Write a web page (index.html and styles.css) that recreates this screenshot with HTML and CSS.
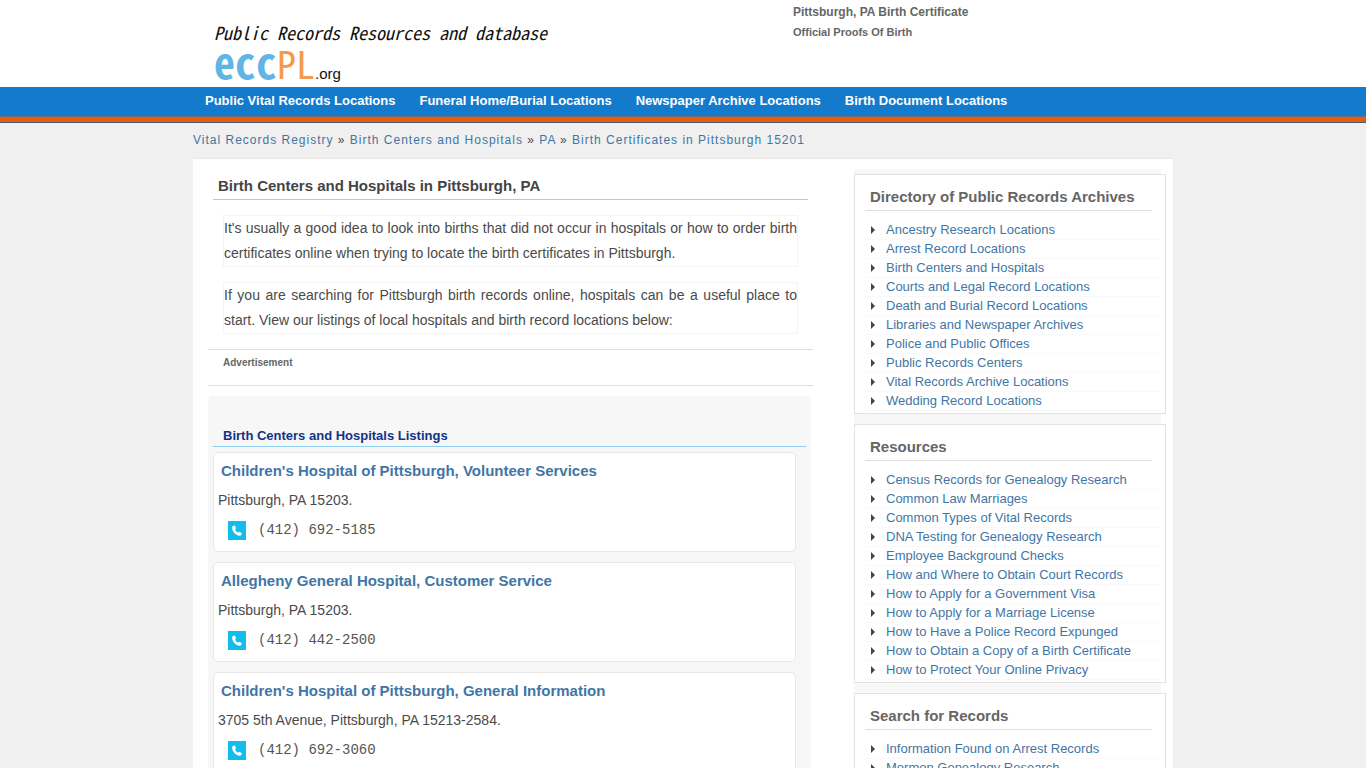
FILE: index.html
```html
<!DOCTYPE html>
<html lang="en">
<head>
<meta charset="utf-8">
<title>Birth Centers and Hospitals in Pittsburgh, PA</title>
<link rel="stylesheet" href="styles.css">
</head>
<body>
<svg class="sprite" aria-hidden="true">
  <symbol id="phone" viewBox="0 0 18 19">
    <path fill="#12bdec" d="M0 0h18v19H0z"/>
    <path fill="#fff" d="M4.6 5.2 6.3 4.4Q6.9 4.3 7.1 4.8L7.9 7Q8 7.5 7.6 7.9L7 8.4Q8 10.6 10.1 11.7L10.8 11Q11.2 10.6 11.7 10.9L13.6 12.1Q14 12.5 13.7 13L12.9 14.3Q12.4 14.9 11.5 14.8C7.5 14.3 4.3 10.8 4.1 6.3Q4 5.5 4.6 5.2Z"/>
  </symbol>
</svg>
<header class="header">
  <div class="wrap header-inner">
    <a class="brand" href="#">
      <span class="tagline">Public Records Resources and database</span>
      <span class="logo"><span class="logo-ecc">ecc</span><span class="logo-pl">PL</span><span class="logo-org">.org</span></span>
    </a>
    <div class="intro">
      <p class="intro-title">Pittsburgh, PA Birth Certificate</p>
      <p class="intro-sub">Official Proofs Of Birth</p>
    </div>
  </div>
</header>
<nav class="nav">
  <div class="wrap nav-inner">
    <a href="#">Public Vital Records Locations</a>
    <a href="#">Funeral Home/Burial Locations</a>
    <a href="#">Newspaper Archive Locations</a>
    <a href="#">Birth Document Locations</a>
  </div>
</nav>
<div class="wrap breadcrumb">
  <a href="#">Vital Records Registry</a> » <a href="#">Birth Centers and Hospitals</a> » <a href="#">PA</a> » <a href="#">Birth Certificates in Pittsburgh 15201</a>
</div>
<div class="wrap page">
  <main class="main">
    <h1>Birth Centers and Hospitals in Pittsburgh, PA</h1>
    <p class="text">It's usually a good idea to look into births that did not occur in hospitals or how to order birth certificates online when trying to locate the birth certificates in Pittsburgh.</p>
    <p class="text">If you are searching for Pittsburgh birth records online, hospitals can be a useful place to start. View our listings of local hospitals and birth record locations below:</p>
    <div class="ad">Advertisement</div>
    <section class="listings">
      <h2>Birth Centers and Hospitals Listings</h2>
      <article class="card">
        <h3><a href="#">Children's Hospital of Pittsburgh, Volunteer Services</a></h3>
        <p class="address">Pittsburgh, PA 15203.</p>
        <p class="phone"><svg class="phone-icon" aria-hidden="true"><use href="#phone"/></svg>(412) 692-5185</p>
      </article>
      <article class="card">
        <h3><a href="#">Allegheny General Hospital, Customer Service</a></h3>
        <p class="address">Pittsburgh, PA 15203.</p>
        <p class="phone"><svg class="phone-icon" aria-hidden="true"><use href="#phone"/></svg>(412) 442-2500</p>
      </article>
      <article class="card">
        <h3><a href="#">Children's Hospital of Pittsburgh, General Information</a></h3>
        <p class="address">3705 5th Avenue, Pittsburgh, PA 15213-2584.</p>
        <p class="phone"><svg class="phone-icon" aria-hidden="true"><use href="#phone"/></svg>(412) 692-3060</p>
      </article>
    </section>
  </main>
  <aside class="sidebar">
    <section class="box">
      <h3>Directory of Public Records Archives</h3>
      <ul>
        <li><a href="#">Ancestry Research Locations</a></li>
        <li><a href="#">Arrest Record Locations</a></li>
        <li><a href="#">Birth Centers and Hospitals</a></li>
        <li><a href="#">Courts and Legal Record Locations</a></li>
        <li><a href="#">Death and Burial Record Locations</a></li>
        <li><a href="#">Libraries and Newspaper Archives</a></li>
        <li><a href="#">Police and Public Offices</a></li>
        <li><a href="#">Public Records Centers</a></li>
        <li><a href="#">Vital Records Archive Locations</a></li>
        <li><a href="#">Wedding Record Locations</a></li>
      </ul>
    </section>
    <section class="box">
      <h3>Resources</h3>
      <ul>
        <li><a href="#">Census Records for Genealogy Research</a></li>
        <li><a href="#">Common Law Marriages</a></li>
        <li><a href="#">Common Types of Vital Records</a></li>
        <li><a href="#">DNA Testing for Genealogy Research</a></li>
        <li><a href="#">Employee Background Checks</a></li>
        <li><a href="#">How and Where to Obtain Court Records</a></li>
        <li><a href="#">How to Apply for a Government Visa</a></li>
        <li><a href="#">How to Apply for a Marriage License</a></li>
        <li><a href="#">How to Have a Police Record Expunged</a></li>
        <li><a href="#">How to Obtain a Copy of a Birth Certificate</a></li>
        <li><a href="#">How to Protect Your Online Privacy</a></li>
      </ul>
    </section>
    <section class="box">
      <h3>Search for Records</h3>
      <ul>
        <li><a href="#">Information Found on Arrest Records</a></li>
        <li><a href="#">Mormon Genealogy Research</a></li>
      </ul>
    </section>
  </aside>
</div>
</body>
</html>
```

FILE: styles.css
```css
*, *::before, *::after { box-sizing: border-box; }
html { scrollbar-width: none; }
body {
  margin: 0;
  background: #f0f0f0;
  color: #4a4a4a;
  font-family: "Liberation Sans", Arial, sans-serif;
  font-size: 14px;
}
h1, h2, h3, p, ul { margin: 0; padding: 0; }
a { color: #3f76a6; text-decoration: none; }
.sprite { display: none; }
.wrap { max-width: 980px; margin: 0 auto; }

.header { background: #fff; }
.header-inner { display: flex; height: 87px; }
.brand { flex: 0 0 600px; padding: 20px 0 0 21px; color: #111; }
.tagline {
  display: block;
  height: 24px;
  font: italic 18px/24px "Noto Sans CJK JP", monospace;
  font-feature-settings: "hwid";
  white-space: nowrap;
}
.logo { display: flex; align-items: baseline; }
.logo-ecc, .logo-pl { font: 42px/34px "Noto Sans CJK JP", sans-serif; font-feature-settings: "hwid"; }
.logo-ecc { color: #61b5e5; font-weight: bold; }
.logo-pl { color: #f49a4d; font-size: 38px; }
.logo-org { font-size: 15px; line-height: 20px; }
.intro { color: #666; font-weight: bold; }
.intro-title { padding-top: 2px; font-size: 12px; line-height: 20px; }
.intro-sub { font-size: 11px; line-height: 20px; }

.nav { background: #147bcc; border-bottom: 1px solid #4b5873; }
.nav::after { content: ""; display: block; height: 6px; background: #ea5b0c; border-top: 1px solid #6a6a80; }
.nav-inner { display: flex; gap: 24px; padding-left: 12px; }
.nav a { color: #fff; font-size: 13px; font-weight: bold; line-height: 28px; padding-bottom: 1px; }

.breadcrumb { padding: 7px 0 8px; font-size: 12px; line-height: 20px; letter-spacing: 1px; }

.page {
  display: flex;
  justify-content: space-between;
  padding: 10px 7px 20px 15px;
  background: #fff;
  border-top: 1px solid #e8e8e8;
}
.main { flex: 0 1 605px; }
h1 {
  margin: 5px 5px 15px;
  padding: 0 0 2px 5px;
  border-bottom: 1px solid #eac07e;
  color: #444;
  font-size: 15px;
  line-height: 23px;
}
.text {
  margin: 0 15px 15px;
  border: 1px solid #f4f4f4;
  line-height: 25px;
  text-align: justify;
}
.ad {
  height: 37px;
  padding-left: 15px;
  border: solid #ddd;
  border-width: 1px 0;
  color: #666;
  font-size: 10px;
  font-weight: bold;
  line-height: 26px;
}
.listings { margin: 10px 2px 0 0; padding: 30px 5px 10px; border-radius: 5px; background: #f7f7f7; }
h2 {
  margin-bottom: 5px;
  padding-left: 10px;
  border-bottom: 1px solid #8ccdf0;
  color: #123388;
  font-size: 13px;
  line-height: 20px;
}
.card {
  margin: 0 10px 10px 0;
  padding: 5px 4px 6px;
  border: 1px solid #e8e8e8;
  border-radius: 5px;
  background: #fff;
}
.card h3 { padding: 0 0 2px 3px; font-size: 15px; line-height: 25px; }
.address { line-height: 31px; }
.phone {
  display: flex;
  align-items: center;
  gap: 12px;
  padding-left: 10px;
  color: #555;
  font-family: "Liberation Mono", monospace;
  line-height: 29px;
}
.phone-icon { width: 18px; height: 19px; }

.sidebar { flex: 0 0 307px; margin-right: 5px; padding-top: 5px; background: #f7f7f7; }
.box { margin: 0 -5px 10px 0; padding: 9px 5px 2px 10px; border: 1px solid #e2e2e2; background: #fff; }
.box h3 {
  margin: 0 8px 10px 0;
  padding-left: 5px;
  border-bottom: 1px solid #ddd;
  color: #666;
  font-size: 15px;
  line-height: 26px;
}
.box ul { list-style: none; }
.box li {
  display: flex;
  align-items: center;
  gap: 11px;
  padding-left: 6px;
  border-bottom: 1px solid #f9f9f9;
  font-size: 13px;
  line-height: 18px;
}
.box li::before { content: ""; border: solid transparent; border-width: 4px 0 4px 4px; border-left-color: #444; }
```
